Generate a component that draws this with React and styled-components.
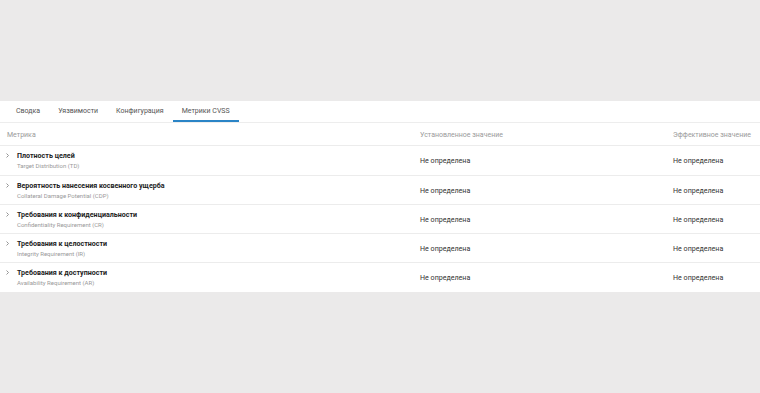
import React from 'react';
import styled, { createGlobalStyle } from 'styled-components';

const GlobalStyle = createGlobalStyle`
  body {
    margin: 0;
    background: #ebeaea;
    font-family: Roboto, "Liberation Sans", sans-serif;
  }
`;

const Page = styled.div`
  padding-top: 101px;
`;

const Panel = styled.div`
  background: #fff;
`;

const Tabs = styled.div`
  display: flex;
  padding-left: 7px;
  height: 21px;
  border-bottom: 1px solid #ededed;
`;

const Tab = styled.div`
  font-size: 7px;
  color: #555;
  padding: 6px 9px 0 9px;
  box-sizing: border-box;
  height: 21px;
  border-bottom: 2px solid ${props => (props.active ? '#2a84c6' : 'transparent')};
`;

const Row = styled.div`
  display: grid;
  grid-template-columns: 420px 253px 1fr;
  align-items: center;
  border-bottom: 1px solid #ececec;
  height: ${props => props.h}px;
  padding-top: ${props => props.pt || 0}px;
  box-sizing: border-box;
  &:last-child {
    border-bottom: none;
  }
`;

const HeadCell = styled.div`
  font-size: 7px;
  color: #9a9a9a;
  padding-left: ${props => props.pl || 0}px;
`;

const MetricCell = styled.div`
  display: flex;
  align-items: flex-start;
  padding-left: 6px;
`;

const Chevron = styled.svg`
  width: 11px;
  height: 9px;
  flex-shrink: 0;
`;

const Title = styled.div`
  font-size: 7.1px;
  font-weight: bold;
  color: #222;
  line-height: 9px;
`;

const Sub = styled.div`
  font-size: 6px;
  color: #999;
  margin-top: 2px;
  line-height: 8px;
`;

const Value = styled.div`
  font-size: 7.1px;
  color: #333;
`;

const rows = [
  ['Плотность целей', 'Target Distribution (TD)'],
  ['Вероятность нанесения косвенного ущерба', 'Collateral Damage Potential (CDP)'],
  ['Требования к конфиденциальности', 'Confidentiality Requirement (CR)'],
  ['Требования к целостности', 'Integrity Requirement (IR)'],
  ['Требования к доступности', 'Availability Requirement (AR)'],
];

const App = () => (
  <Page>
    <GlobalStyle />
    <Panel>
      <Tabs>
        <Tab>Сводка</Tab>
        <Tab>Уязвимости</Tab>
        <Tab>Конфигурация</Tab>
        <Tab active>Метрики CVSS</Tab>
      </Tabs>
      <Row h={23} pt={2}>
        <HeadCell pl={7}>Метрика</HeadCell>
        <HeadCell>Установленное значение</HeadCell>
        <HeadCell>Эффективное значение</HeadCell>
      </Row>
      {rows.map(([title, sub], i) => (
        <Row h={i === 0 ? 30 : 29} key={title}>
          <MetricCell>
            <Chevron viewBox="0 0 11 9">
              <path d="M0.5 2.5 L2.5 4.5 L0.5 6.5" fill="none" stroke="#888" strokeWidth="0.9" />
            </Chevron>
            <div>
              <Title>{title}</Title>
              <Sub>{sub}</Sub>
            </div>
          </MetricCell>
          <Value>Не определена</Value>
          <Value>Не определена</Value>
        </Row>
      ))}
    </Panel>
  </Page>
);

export default App;
